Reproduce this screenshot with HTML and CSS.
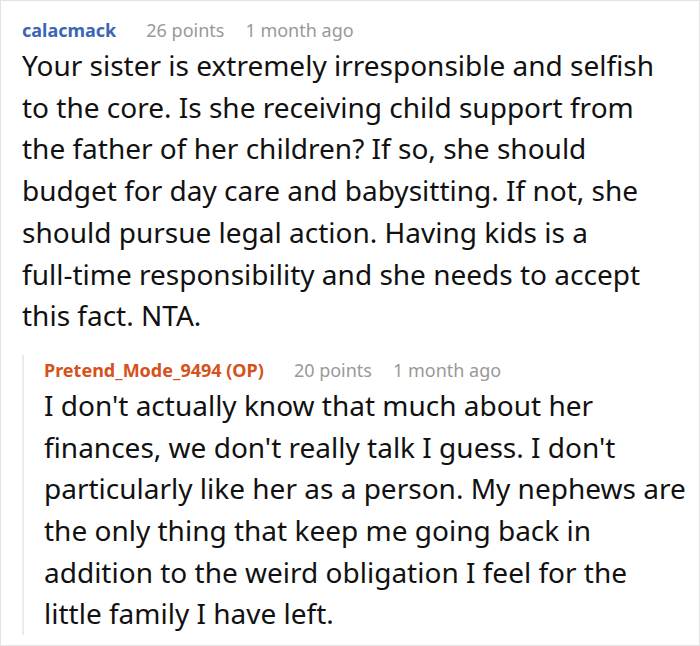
FILE: index.html
```html
<!DOCTYPE html>
<html>
<head>
<meta charset="utf-8">
<link rel="stylesheet" href="styles.css">
</head>
<body>
<div class="thread">
  <div class="comment">
    <div class="meta">
      <span class="author">calacmack</span>
      <span class="points">26 points</span>
      <span class="time">1 month ago</span>
    </div>
    <p class="body top">Your sister is extremely irresponsible and selfish to the core. Is she receiving child support from the father of her children? If so, she should budget for day care and babysitting. If not, she should pursue legal action. Having kids is a <span class="nowrap">full-time</span> responsibility and she needs to accept this fact. NTA.</p>
    <div class="reply">
      <div class="meta">
        <span class="author op">Pretend_Mode_9494 (OP)</span>
        <span class="points">20 points</span>
        <span class="time">1 month ago</span>
      </div>
      <p class="body">I don't actually know that much about her finances, we don't really talk I guess. I don't particularly like her as a person. My nephews are the only thing that keep me going back in addition to the weird obligation I feel for the little family I have left.</p>
    </div>
  </div>
</div>
</body>
</html>
```
FILE: styles.css
```css
html, body {
  margin: 0;
  padding: 0;
  background: #fff;
}
.thread {
  box-sizing: border-box;
  width: 700px;
  height: 646px;
  border: 1px solid #e3e3e3;
  padding: 14px 10px 0 21px;
  font-family: "Noto Sans", "Open Sans", sans-serif;
  color: #111;
}
.meta {
  display: flex;
  align-items: baseline;
  font-size: 18px;
  line-height: 30px;
  color: #999;
}
.author {
  font-weight: bold;
  color: #3a66b5;
  margin-right: 30px;
}
.author.op {
  color: #d5521c;
}
.points {
  margin-right: 21px;
}
.body {
  margin: 0;
  font-size: 28px;
  line-height: 41.7px;
}
.body.top {
  margin-right: 10px;
}
.nowrap {
  white-space: nowrap;
}
.reply {
  margin-top: 18px;
  border-left: 2px solid #ebebeb;
  padding-left: 20px;
}
```
